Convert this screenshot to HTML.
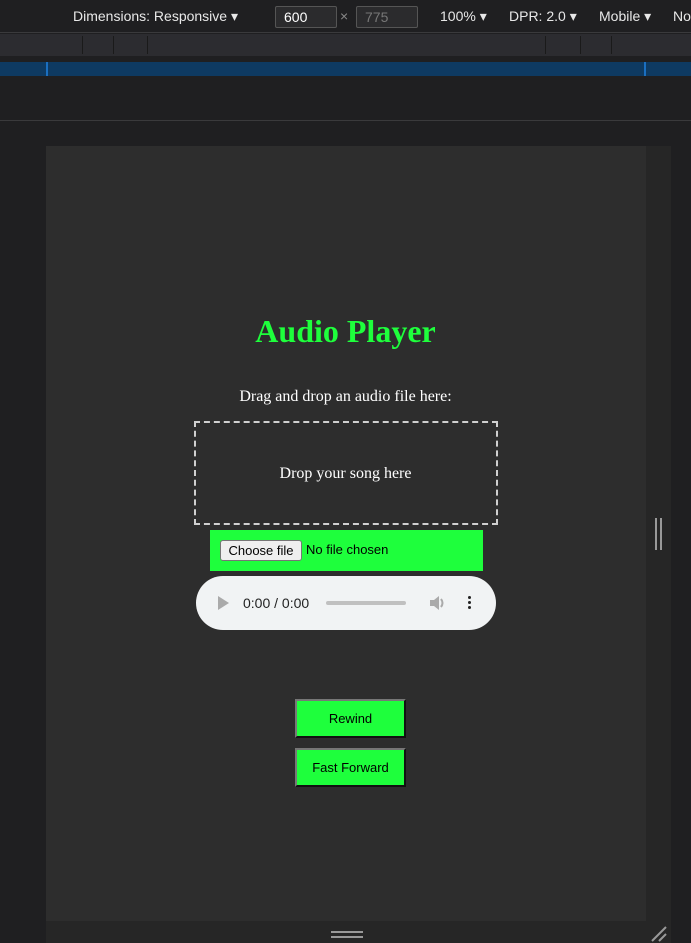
<!DOCTYPE html>
<html><head><style>
*{box-sizing:border-box;margin:0;padding:0}
body{width:691px;height:943px;background:#1f1f21;position:relative;overflow:hidden;font-family:"Liberation Sans",sans-serif}
.abs{position:absolute}
.tb{left:0;top:0;width:691px;height:33px;background:#1f1f21;border-bottom:1px solid #3a3a3c;color:#e8e8e8;font-size:14px}
.tb span{position:absolute;top:8px}
.inp{position:absolute;top:6px;height:22px;border:1px solid #555;border-radius:2px;background:#2b2b2d;font-size:14px;padding:2px 8px}
.ruler{left:0;top:34px;width:691px;height:22px;background:#2c2c30}
.ruler i{position:absolute;top:2px;width:1px;height:18px;background:#1a1a1a}
.blue{left:0;top:62px;width:691px;height:14px;background:#0e3a62}
.blue i{position:absolute;top:0;width:2px;height:14px;background:#1b6fc0}
.line{left:0;top:120px;width:691px;height:1px;background:#3a3a3c}
.dev{left:46px;top:146px;width:600px;height:775px;background:#2d2d2d}
.side{left:646px;top:146px;width:25px;height:797px;background:#262626}
.bot{left:46px;top:921px;width:600px;height:22px;background:#262626}
h1{position:absolute;left:0;width:691px;top:313px;text-align:center;font:bold 32px "Liberation Serif",serif;color:#1eff3c}
.t{position:absolute;left:0;width:691px;text-align:center;font:16px "Liberation Serif",serif;color:#fff}
.drop{left:194px;top:421px;width:304px;height:104px;border:2px dashed #d0d0d0}
.file{left:210px;top:530px;width:273px;height:41px;background:#1eff3c;font-size:13px;color:#000}
.cf{position:absolute;left:10px;top:10px;width:82px;height:21px;background:#efefef;border:1px solid #767676;border-radius:3px;font-size:13px;text-align:center;line-height:19px}
.aud{left:196px;top:576px;width:300px;height:54px;background:#f1f3f4;border-radius:27px;font-size:14px;color:#222}
.btn{left:295px;width:111px;height:39px;background:#1eff3c;border:2px solid;border-color:#777 #111 #111 #777;font-size:13px;text-align:center;line-height:35px;color:#000}
</style></head><body>
<div class="abs tb">
<span style="left:73px">Dimensions: Responsive ▾</span>
<div class="inp" style="left:275px;width:62px;color:#fff">600</div>
<span style="left:340px;color:#888">×</span>
<div class="inp" style="left:356px;width:62px;color:#777">775</div>
<span style="left:440px">100% ▾</span>
<span style="left:509px">DPR: 2.0 ▾</span>
<span style="left:599px">Mobile ▾</span>
<span style="left:673px">No</span>
</div>
<div class="abs ruler"><i style="left:82px"></i><i style="left:113px"></i><i style="left:147px"></i><i style="left:545px"></i><i style="left:580px"></i><i style="left:611px"></i></div>
<div class="abs blue"><i style="left:46px"></i><i style="left:644px"></i></div>
<div class="abs line"></div>
<div class="abs dev"></div>
<div class="abs side"></div>
<div class="abs bot"></div>
<div class="abs" style="left:655px;top:518px;width:2px;height:32px;background:#999"></div>
<div class="abs" style="left:660px;top:518px;width:2px;height:32px;background:#999"></div>
<div class="abs" style="left:331px;top:931px;width:32px;height:2px;background:#999"></div>
<div class="abs" style="left:331px;top:936px;width:32px;height:2px;background:#999"></div>
<svg class="abs" style="left:650px;top:925px" width="18" height="18"><path d="M2 16L16 2M9 16L16 9" stroke="#999" stroke-width="2"/></svg>
<h1>Audio Player</h1>
<div class="t" style="top:388px">Drag and drop an audio file here:</div>
<div class="abs drop"></div>
<div class="t" style="top:465px">Drop your song here</div>
<div class="abs file"><div class="cf">Choose file</div><span style="position:absolute;left:96px;top:12px;font-size:13px">No file chosen</span></div>
<div class="abs aud">
<svg style="position:absolute;left:22px;top:20px" width="12" height="14"><path d="M0 0L11 7L0 14Z" fill="#aaa"/></svg>
<span style="position:absolute;left:47px;top:19px">0:00 / 0:00</span>
<div style="position:absolute;left:130px;top:25px;width:80px;height:4px;border-radius:2px;background:#c0c0c0"></div>
<svg style="position:absolute;left:233px;top:19px" width="18" height="16"><path d="M1 5h4l5-4v14l-5-4H1z" fill="#aaa"/><path d="M12 4q3 4 0 8" stroke="#aaa" stroke-width="2" fill="none"/></svg>
<div style="position:absolute;left:272px;top:20px;width:3px;height:3px;border-radius:50%;background:#222;box-shadow:0 5px 0 #222,0 10px 0 #222"></div>
</div>
<div class="abs btn" style="top:699px">Rewind</div>
<div class="abs btn" style="top:748px">Fast Forward</div>
</body></html>
